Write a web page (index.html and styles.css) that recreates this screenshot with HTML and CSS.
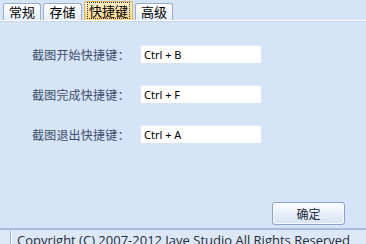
FILE: index.html
```html
<!DOCTYPE html>
<html lang="zh-CN">
<head>
    <meta charset="UTF-8">
    <title>快捷键设置</title>
    <link rel="stylesheet" href="styles.css">
</head>
<body>
    <div class="window">
        <!-- 选项卡 -->
        <div class="tabs">
            <div class="tab">常规</div>
            <div class="tab">存储</div>
            <div class="tab active"><span class="focus">快捷键</span></div>
            <div class="tab">高级</div>
        </div>

        <!-- 设置面板 -->
        <div class="panel">
            <div class="form">
                <div class="row">
                    <label class="label">截图开始快捷键：</label>
                    <div class="field">Ctrl + B</div>
                </div>
                <div class="row">
                    <label class="label">截图完成快捷键：</label>
                    <div class="field">Ctrl + F</div>
                </div>
                <div class="row">
                    <label class="label">截图退出快捷键：</label>
                    <div class="field">Ctrl + A</div>
                </div>
            </div>
            <div class="actions">
                <button class="btn">确定</button>
            </div>
        </div>

        <!-- 状态栏 -->
        <div class="status">
            <span class="grip"></span>
            <span class="status-text">Copyright (C) 2007-2012 Jave Studio All Rights Reserved</span>
        </div>
    </div>
</body>
</html>
```

FILE: styles.css
```css
/* Algemeen */
body {
    margin: 0;
    font-family: "Noto Sans CJK SC", "Liberation Sans", sans-serif;
    font-size: 12px;
    background-color: #d6e4f7;
    overflow: hidden;
}

.window {
    width: 366px;
    height: 244px;
    display: flex;
    flex-direction: column;
    overflow: hidden;
}

/* Tabs */
.tabs {
    display: flex;
    align-items: flex-end;
    gap: 2px;
    height: 20px;
    padding-left: 3px;
    border-bottom: 1px solid #ffffff;
    box-shadow: 0 1px 0 #c4d4ea;
    background-color: #d6e4f7;
}

.tab {
    box-sizing: border-box;
    width: 38px;
    height: 17px;
    line-height: 16px;
    text-align: center;
    color: #000;
    border: 1px solid #9aaecb;
    border-bottom: none;
    border-radius: 3px 3px 0 0;
    background: linear-gradient(#ffffff, #e4ecf7);
    font-size: 13px;
}

.tab:nth-child(2) {
    width: 39px;
}

.tab.active {
    width: 49px;
    height: 19px;
    line-height: 18px;
    border-color: #e2b45a;
    background: linear-gradient(#fff2cc, #fcd489);
}

.tab .focus {
    display: inline-block;
    line-height: 15px;
    padding: 0 1px;
    outline: 1px dotted #333;
}

/* Paneel */
.panel {
    flex: 1;
    display: flex;
    flex-direction: column;
    padding: 24px 21px 3px 32px;
}

.form {
    display: flex;
    flex-direction: column;
    gap: 22px;
}

.row {
    display: flex;
    align-items: center;
    height: 18px;
}

.label {
    width: 109px;
    color: #3c4e6a;
    font-size: 12px;
    letter-spacing: 0.2px;
}

.field {
    width: 117px;
    height: 17px;
    line-height: 17px;
    padding-left: 3px;
    background-color: #fff;
    border-top: 1px solid #e6ebf2;
    font-family: "Noto Sans", sans-serif;
    font-size: 11px;
    color: #000;
}

.actions {
    margin-top: auto;
    display: flex;
    justify-content: flex-end;
}

.btn {
    width: 73px;
    height: 23px;
    padding: 0;
    border: 1px solid #8ea3c2;
    border-radius: 3px;
    background: linear-gradient(#ffffff, #e6eef9 50%, #d7e3f4);
    color: #1e2a3c;
    font-family: "Noto Sans CJK SC", sans-serif;
    font-size: 12px;
    box-shadow: inset 0 0 0 1px #f6f9fd;
}

/* Statusbalk */
.status {
    height: 13px;
    display: flex;
    align-items: flex-start;
    border-top: 2px solid #a9bcd8;
    background-color: #dde8f6;
    padding-top: 1px;
    flex-shrink: 0;
}

.grip {
    width: 10px;
    height: 14px;
    border-right: 1px solid #9fb2cc;
    box-shadow: 1px 0 0 #ffffff;
}

.status-text {
    margin-left: 6px;
    margin-top: 1px;
    font-family: "Open Sans", "Liberation Sans", sans-serif;
    font-size: 13px;
    line-height: 16px;
    color: #1f2a3a;
    white-space: nowrap;
}
```
